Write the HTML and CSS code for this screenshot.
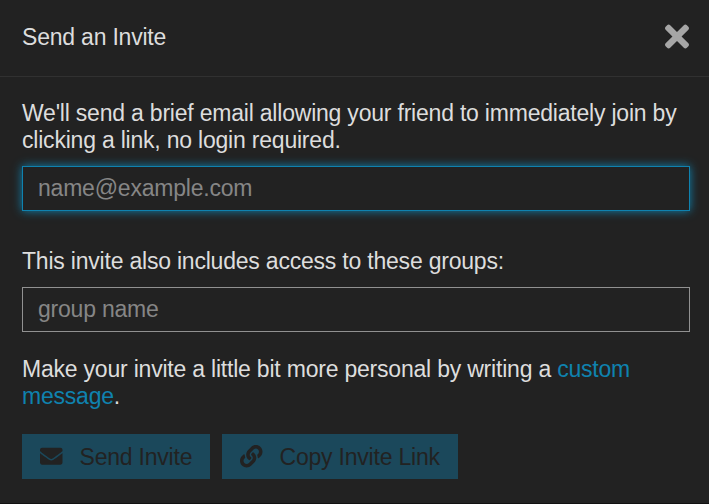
FILE: index.html
```html
<!DOCTYPE html>
<html lang="en">
<head>
<meta charset="utf-8">
<title>Send an Invite</title>
<link rel="stylesheet" href="styles.css">
</head>
<body>
<section class="modal">
  <header class="modal-header">
    <h1 class="title">Send an Invite</h1>
    <button class="close" aria-label="Close"><svg viewBox="0 0 352 512"><path d="M242.72 256l100.07-100.07c12.28-12.28 12.28-32.19 0-44.48l-22.24-22.24c-12.28-12.28-32.19-12.28-44.48 0L176 189.28 75.93 89.21c-12.28-12.28-32.19-12.28-44.48 0L9.21 111.45c-12.28 12.28-12.28 32.19 0 44.48L109.28 256 9.21 356.07c-12.28 12.28-12.28 32.19 0 44.48l22.24 22.24c12.28 12.28 32.2 12.28 44.48 0L176 322.72l100.07 100.07c12.28 12.28 32.2 12.28 44.48 0l22.24-22.24c12.28-12.28 12.28-32.19 0-44.48L242.72 256z"/></svg></button>
  </header>
  <div class="modal-body">
    <p class="intro">We'll send a brief email allowing your friend to immediately join by clicking a link, no login required.</p>
    <input class="field focused" type="text" placeholder="name@example.com">
    <p class="groups">This invite also includes access to these groups:</p>
    <input class="field" type="text" placeholder="group name">
    <p class="message">Make your invite a little bit more personal by writing a <a class="link">custom message</a>.</p>
    <div class="actions">
      <button class="btn"><svg class="icon" viewBox="0 0 512 512"><path d="M502.3 190.8c3.9-3.1 9.7-.2 9.7 4.7V400c0 26.5-21.5 48-48 48H48c-26.500 0-48-21.500-48-48V195.600c0-5 5.700-7.800 9.700-4.700 22.400 17.400 52.100 39.500 154.100 113.600 21.100 15.400 56.700 47.800 92.200 47.600 35.700.3 72-32.800 92.300-47.600 102-74.100 131.600-96.300 154-113.700zM256 320c23.200.4 56.600-29.200 73.400-41.400 132.700-96.300 142.800-104.700 173.400-128.700 5.800-4.500 9.200-11.500 9.200-18.900v-19c0-26.500-21.500-48-48-48H48c-26.500 0-48 21.500-48 48v19c0 7.400 3.400 14.300 9.200 18.900 30.600 23.900 40.700 32.400 173.400 128.700 16.800 12.200 50.200 41.800 73.400 41.400z"/></svg><span class="label">Send Invite</span></button>
      <button class="btn"><svg class="icon" viewBox="0 0 512 512"><path d="M326.612 185.391c59.747 59.809 58.927 155.698.36 214.590-.11.120-.240.250-.360.370l-67.200 67.200c-59.270 59.270-155.699 59.262-214.960 0-59.270-59.260-59.270-155.700 0-214.960l37.106-37.106c9.840-9.840 26.786-3.300 27.294 10.606.648 17.722 3.826 35.527 9.690 52.721 1.986 5.822.567 12.262-3.783 16.612l-13.087 13.087c-28.026 28.026-28.905 73.660-1.155 101.960 28.024 28.579 74.086 28.749 102.325.510l67.200-67.190c28.191-28.191 28.073-73.757 0-101.830-3.701-3.694-7.429-6.564-10.341-8.569a16.037 16.037 0 0 1-6.947-12.606c-.396-10.567 3.348-21.456 11.698-29.806l21.054-21.055c5.521-5.521 14.182-6.199 20.584-1.731a152.482 152.482 0 0 1 20.522 17.197zM467.547 44.449c-59.261-59.262-155.690-59.270-214.960 0l-67.200 67.200c-.120.120-.250.250-.360.370-58.566 58.892-59.387 154.781.360 214.590a152.454 152.454 0 0 0 20.521 17.196c6.402 4.468 15.064 3.789 20.584-1.731l21.054-21.055c8.350-8.350 12.094-19.239 11.698-29.806a16.037 16.037 0 0 0-6.947-12.606c-2.912-2.005-6.640-4.875-10.341-8.569-28.073-28.073-28.191-73.639 0-101.830l67.200-67.190c28.239-28.239 74.300-28.069 102.325.510 27.750 28.300 26.872 73.934-1.155 101.960l-13.087 13.087c-4.350 4.350-5.769 10.790-3.783 16.612 5.864 17.194 9.042 34.999 9.690 52.721.509 13.906 17.454 20.446 27.294 10.606l37.106-37.106c59.271-59.259 59.271-155.699.001-214.959z"/></svg><span class="label">Copy Invite Link</span></button>
    </div>
  </div>
</section>
</body>
</html>
```
FILE: styles.css
```css
* { box-sizing: border-box; }
body {
  margin: 0;
  background: #222;
  color: #ddd;
  font: 23px/27px "Liberation Sans", Arial, sans-serif;
  letter-spacing: -0.21px;
}
.modal { height: 504px; overflow: hidden; border-bottom: 1px solid #111; }
.modal-header {
  display: flex;
  align-items: center;
  justify-content: space-between;
  height: 77px;
  padding: 0 20px 4px 22px;
  border-bottom: 1px solid #313131;
}
.title { margin: 0; padding-top: 2px; font: inherit; }
.close { display: block; padding: 0; border: 0; background: none; }
.close svg { display: block; width: 24px; height: 35px; fill: #a6a6a6; }
.modal-body { padding: 23px 19px 0 22px; }
p { margin: 0; }
.field {
  display: block;
  width: 100%;
  height: 45px;
  padding: 0 15px;
  border: 1px solid #919191;
  border-radius: 0;
  outline: 0;
  background: #222;
  color: #ddd;
  font: inherit;
  letter-spacing: inherit;
}
.field::placeholder { color: #868686; opacity: 1; }
.focused { border-color: #0f82af; box-shadow: 0 0 9px #0f82af; }
.intro { margin-bottom: 12px; }
.groups { margin: 37px 0 12px; }
.message { margin-top: 24px; }
.link { color: #0f82af; }
.actions { display: flex; gap: 12px; margin-top: 24px; }
.btn {
  display: flex;
  align-items: center;
  gap: 17px;
  height: 45px;
  padding: 0 18px;
  border: 0;
  background: #1b485b;
  color: #222;
  font: inherit;
  letter-spacing: inherit;
  white-space: nowrap;
}
.btn:first-child { width: 188px; }
.btn:last-child { width: 236px; }
.label { padding-top: 2px; }
.icon { flex: none; width: 22.5px; height: 22.5px; fill: #222; }
```
